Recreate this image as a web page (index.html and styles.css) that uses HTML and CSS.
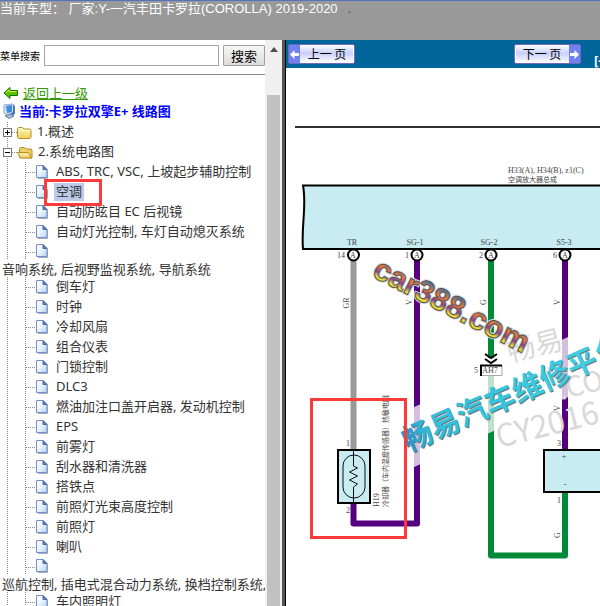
FILE: index.html
```html
<!DOCTYPE html>
<html lang="zh-CN">
<head>
<meta charset="utf-8">
<title>卡罗拉双擎E+ 线路图</title>
<link rel="stylesheet" href="styles.css">
</head>
<body>
<svg class="defs" aria-hidden="true">
  <defs>
    <linearGradient id="pageFill" x1="0" y1="0" x2="1" y2="1"><stop offset="0" stop-color="#fff"/><stop offset=".4" stop-color="#f0f7ff"/><stop offset="1" stop-color="#b5d3f5"/></linearGradient>
    <linearGradient id="folderFill" x1="0" y1="0" x2="0" y2="1"><stop offset="0" stop-color="#fff6b0"/><stop offset="1" stop-color="#eed060"/></linearGradient>
    <symbol id="file" viewBox="0 0 12 14"><path d="M2 13.5h9.5V5" fill="none" stroke="#a8acb8"/><path d="M.5.5h6.500l4 4v8H.5z" fill="url(#pageFill)" stroke="#7590c8"/><path d="M7 .5v4h4z" fill="#6483c0" stroke="#4a68a8"/></symbol>
    <symbol id="folder" viewBox="0 0 15 13"><path d="M.5 11.500v-9l1-1h4l1.500 1.500h6l1 1v7.500l-1 1h-11.500z" fill="url(#folderFill)" stroke="#b58c28"/><path d="M1.500 4.500h12" stroke="#fffbd8"/></symbol>
    <symbol id="folder-open" viewBox="0 0 16 13"><path d="M2.500 11.500v-9l1-1h4l1.500 1.500h5l1 1v8z" fill="#ecd064" stroke="#b58c28"/><path d="M.5 6.500h11l3 5.500h-11z" fill="url(#folderFill)" stroke="#b58c28"/></symbol>
  </defs>
</svg>
<header class="top">当前车型： 厂家:Y-一汽丰田卡罗拉(COROLLA) 2019-2020<span class="dot">.</span></header>
<div class="main">
  <aside class="side">
    <div class="side-body">
      <form class="search">
        <label for="q">菜单搜索</label>
        <input id="q" type="text">
        <button type="button">搜索</button>
      </form>
      <nav class="menu">
        <div class="line back"><svg width="16" height="14" viewBox="0 0 16 14" aria-hidden="true"><path d="M1 7l6-5.500v3h7.500v5H7v3z" fill="#55c400" stroke="#176f00"/><path d="M3 6.500L6.500 4v1.500h7" fill="none" stroke="#e4f030"/></svg><a href="#">返回上一级</a></div>
        <div class="line current"><svg width="14" height="16" viewBox="0 0 14 16" aria-hidden="true"><path d="M1 2l8-1 2 1v8l-7 2-3-2z" fill="#d2e3f8" stroke="#8ba8d0"/><path d="M3 3l6-1v7l-5 1z" fill="#398fe0"/><path d="M10 2l2 1v8l-4 2v-3l2-1z" fill="#5074ac"/><path d="M2 13l5-2 4 2-5 2.500z" fill="#a9bad2" stroke="#6881a8"/></svg><b>当前:卡罗拉双擎E+ 线路图</b></div>
        <ul class="tree">
          <li class="node"><span class="toggle plus"></span><svg width="15" height="13"><use href="#folder"/></svg><a href="#">1.概述</a></li>
          <li class="node"><span class="toggle"></span><svg width="16" height="13"><use href="#folder-open"/></svg><a href="#">2.系统电路图</a></li>
          <li class="leaf"><svg><use href="#file"/></svg><a href="#">ABS, TRC, VSC, 上坡起步辅助控制</a></li>
          <li class="leaf marked"><svg><use href="#file"/></svg><a href="#" class="selected">空调</a></li>
          <li class="leaf"><svg><use href="#file"/></svg><a href="#">自动防眩目 EC 后视镜</a></li>
          <li class="leaf"><svg><use href="#file"/></svg><a href="#">自动灯光控制, 车灯自动熄灭系统</a></li>
          <li class="leaf short"><svg><use href="#file"/></svg></li>
          <li class="wrapped"><a href="#">音响系统, 后视野监视系统, 导航系统</a></li>
          <li class="leaf"><svg><use href="#file"/></svg><a href="#">倒车灯</a></li>
          <li class="leaf"><svg><use href="#file"/></svg><a href="#">时钟</a></li>
          <li class="leaf"><svg><use href="#file"/></svg><a href="#">冷却风扇</a></li>
          <li class="leaf"><svg><use href="#file"/></svg><a href="#">组合仪表</a></li>
          <li class="leaf"><svg><use href="#file"/></svg><a href="#">门锁控制</a></li>
          <li class="leaf"><svg><use href="#file"/></svg><a href="#">DLC3</a></li>
          <li class="leaf"><svg><use href="#file"/></svg><a href="#">燃油加注口盖开启器, 发动机控制</a></li>
          <li class="leaf"><svg><use href="#file"/></svg><a href="#">EPS</a></li>
          <li class="leaf"><svg><use href="#file"/></svg><a href="#">前雾灯</a></li>
          <li class="leaf"><svg><use href="#file"/></svg><a href="#">刮水器和清洗器</a></li>
          <li class="leaf"><svg><use href="#file"/></svg><a href="#">搭铁点</a></li>
          <li class="leaf"><svg><use href="#file"/></svg><a href="#">前照灯光束高度控制</a></li>
          <li class="leaf"><svg><use href="#file"/></svg><a href="#">前照灯</a></li>
          <li class="leaf"><svg><use href="#file"/></svg><a href="#">喇叭</a></li>
          <li class="leaf short"><svg><use href="#file"/></svg></li>
          <li class="wrapped"><a href="#">巡航控制, 插电式混合动力系统, 换档控制系统,</a></li>
          <li class="leaf"><svg><use href="#file"/></svg><a href="#">车内照明灯</a></li>
        </ul>
      </nav>
    </div>
    <div class="scroll"><svg width="8" height="5" viewBox="0 0 8 5" aria-hidden="true"><path d="M0 5L4 0l4 5z" fill="#505050"/></svg><div class="thumb"></div></div>
  </aside>
  <section class="view">
    <div class="bar">
      <button type="button" class="page"><span class="arrow"><svg width="9" height="9" viewBox="0 0 9 9" aria-hidden="true"><path d="M0 4.500L4.500 0v3H9v3H4.500v3z" fill="#fff"/></svg></span><span class="word">上一 页</span></button>
      <button type="button" class="page"><span class="word">下一 页</span><span class="arrow"><svg width="9" height="9" viewBox="0 0 9 9" aria-hidden="true"><path d="M9 4.500L4.500 0v3H0v3h4.500v3z" fill="#fff"/></svg></span></button>
      <span class="fit">[-</span>
    </div>
    <svg class="diagram" width="414" height="538" viewBox="286 68 414 538" role="img" aria-label="空调电路图">
      <defs>
        <linearGradient id="rainbow" x1="0" y1="0" x2="0" y2="1"><stop offset=".2" stop-color="#4d70a0"/><stop offset=".42" stop-color="#f07a30"/><stop offset=".6" stop-color="#8c4096"/><stop offset=".74" stop-color="#f0e030"/><stop offset="1" stop-color="#c8b020"/></linearGradient>
        <linearGradient id="cyan" x1="0" x2="1"><stop offset="0" stop-color="#2590cc"/><stop offset=".12" stop-color="#30bedc"/><stop offset="1" stop-color="#40d2e4"/></linearGradient>
      </defs>
      <path d="M295 127H700" stroke="#332c30" stroke-width="2"/>
      <g class="cad"><text x="508" y="173">H33(A), H34(B), z1(C)</text><text x="508" y="182" class="song">空调放大器总成</text></g>
      <path d="M700 185.500H303C307 207 301 225 303 249H700" fill="#c9ebf2" stroke="#000" stroke-width="2"/>
      <g fill="none" stroke-width="6" stroke-linejoin="round">
        <path d="M353.500 260V450" stroke="#999"/>
        <path d="M417 260V523.500H353.500V502" stroke="#54007f"/>
        <path d="M491 260V358M491 376V555.500H565V492" stroke="#008937"/>
        <path d="M565 260V450" stroke="#54007f"/>
      </g>
      <g fill="#fff" stroke="#000" stroke-width="2"><circle cx="353.500" cy="255" r="5.500"/><circle cx="417" cy="255" r="5.500"/><circle cx="491" cy="255" r="5.500"/><circle cx="565" cy="255" r="5.500"/></g>
      <g class="cad mid"><text x="353" y="258">A</text><text x="417" y="258">A</text><text x="491" y="258">A</text><text x="565" y="258">A</text><text x="352" y="245">TR</text><text x="415" y="245">SG-1</text><text x="489" y="245">SG-2</text><text x="564" y="245">S5-3</text><text x="341" y="258">14</text><text x="407" y="258">1</text><text x="481" y="258">2</text><text x="555" y="258">6</text><text x="348" y="446">1</text><text x="348" y="513">2</text><text x="559" y="446">3</text><text x="559" y="503">1</text><text x="476" y="373">5</text>
        <text transform="translate(349 303) rotate(-90)">GR</text><text transform="translate(412 302) rotate(-90)">V</text><text transform="translate(486 302) rotate(-90)">G</text><text transform="translate(560 302) rotate(-90)">V</text><text transform="translate(560 408) rotate(-90)">V</text><text transform="translate(560 535) rotate(-90)">G</text></g>
      <path d="M485 354l6 4 6-4M485 359l6 4 6-4" fill="none" stroke="#000" stroke-width="2"/>
      <g class="cad"><text class="song" transform="translate(388 507) rotate(-90)">冷却器（车内温度传感器）热敏电阻</text><text transform="translate(379 507) rotate(-90)">H19</text></g>
      <g stroke="#000" stroke-width="2" fill="#c9ebf2"><path d="M338 450h32v53h-32z"/><path d="M700 450H544v42H700"/></g>
      <g fill="none" stroke="#111" stroke-width="1"><rect x="343" y="455" width="22" height="43" rx="11"/><path d="M353.500 450v16l4 2-8 4 8 4-8 4 8 4-4 3v16"/></g>
      <g class="cad mid"><text x="564" y="459">+</text><text x="565" y="487">-</text></g>
      <path d="M401 413L610 318V378L401 473z" fill="#fff" fill-opacity=".75"/>
      <path d="M481 365.500h21v10h-21z" fill="#fff" stroke="#aaa"/><path d="M502 365.500h-21v10.500" fill="none" stroke="#000" stroke-width="2"/>
      <text x="490" y="373" class="cad mid">AH7</text>
      <g class="ghost"><text transform="translate(510 362) rotate(-14)" font-size="28">畅易</text><text transform="translate(561 400) rotate(-14)" font-size="28">.CO</text><text transform="translate(499 448) rotate(-14)" font-size="31">CY2016</text></g>
      <text class="site halo" transform="translate(371 276) rotate(27)">car388.com</text>
      <text class="site" transform="translate(371 276) rotate(27)">car388.com</text>
      <text class="brand under" transform="translate(409 453) rotate(-24)">畅易汽车维修平台</text>
      <text class="brand" transform="translate(408 452) rotate(-24)">畅易汽车维修平台</text>
      <path d="M311.500 399.500h94v138h-94z" fill="none" stroke="#fc3a3a" stroke-width="3"/>
    </svg>
  </section>
</div>
</body>
</html>
```

FILE: styles.css
```css
*, *::after { box-sizing: border-box; }
body {
  margin: 0;
  height: 100vh;
  display: flex;
  flex-direction: column;
  overflow: hidden;
  background: #fff;
  color: #333;
  font: 13px/20px "Noto Sans", "Noto Sans CJK SC", sans-serif;
}
.defs { position: absolute; width: 0; height: 0; }
button { padding: 0; margin: 0; }

.top {
  flex: none;
  height: 40px;
  border-top: 1px solid #5273c4;
  background: #999;
  color: #fff;
  font: 13px/16px "Liberation Sans", "Noto Sans CJK SC", sans-serif;
  white-space: pre;
}
.dot { margin-left: 10px; color: #533a20; }

.main { flex: 1; display: flex; min-height: 0; }
.side { flex: none; display: flex; width: 286px; border-right: 1px solid #000; box-shadow: inset -3px 0 #555; padding-right: 3px; }
.side-body { flex: 1; min-width: 0; overflow: hidden; }

.search {
  display: flex;
  align-items: center;
  height: 35px;
  padding-bottom: 3px;
  border-bottom: 1px solid #888;
  color: #000;
}
.search label { width: 44px; font-size: 10px; white-space: nowrap; }
.search input { flex: 1; min-width: 0; height: 21px; margin-right: 4px; border: 1px solid #a5a5a5; background: #fff; }
.search button {
  width: 42px;
  height: 21px;
  border: 1px solid #a0a0a0;
  border-radius: 1px;
  background: linear-gradient(#f6f6f6, #dcdcdc);
  font: 13px/18px "Noto Sans CJK SC", sans-serif;
}

.menu { padding-top: 8px; white-space: nowrap; }
.menu a { color: inherit; text-decoration: none; }
.line { display: flex; align-items: center; gap: 4px; height: 20px; padding-left: 3px; }
.menu .back a { color: #390; text-decoration: underline; }
.line.current { height: 19px; padding-bottom: 3px; gap: 2px; color: #00f; }

.tree { margin: 0; padding: 0; list-style: none; }
.tree li { display: flex; align-items: center; height: 20px; }
.tree .node {
  gap: 5px;
  padding-left: 3px;
  background:
    repeating-linear-gradient(#888 0 1px, transparent 1px 2px) 7px 0 / 1px 100% no-repeat,
    repeating-linear-gradient(90deg, #888 0 1px, transparent 1px 2px) 12px 10px / 5px 1px no-repeat;
}
.tree .node a { padding-bottom: 2px; }
.toggle { width: 9px; height: 9px; border: 1px solid #777; background: linear-gradient(#000, #000) center / 5px 1px no-repeat #fff; }
.toggle.plus { background: linear-gradient(#000, #000) center / 5px 1px no-repeat, linear-gradient(#000, #000) center / 1px 5px no-repeat #fff; }
.tree .leaf {
  gap: 6px;
  padding-left: 36px;
  background:
    repeating-linear-gradient(#888 0 1px, transparent 1px 2px) 7px 0 / 1px 100% no-repeat,
    repeating-linear-gradient(#888 0 1px, transparent 1px 2px) 25px 0 / 1px 100% no-repeat,
    repeating-linear-gradient(90deg, #888 0 1px, transparent 1px 2px) 26px 10px / 10px 1px no-repeat;
}
.leaf svg { width: 12px; height: 14px; }
.leaf a { padding: 0 2px 2px; line-height: 16px; }
.leaf .selected { background: #bccbe9; }
.tree .short { height: 18px; }
.tree .wrapped { height: 17px; padding-left: 2px; }
.marked { position: relative; }
.marked::after { content: ""; position: absolute; left: 44px; top: -3px; width: 58px; height: 27px; border: 3px solid #fc3a3a; }

.scroll { flex: none; width: 17px; display: flex; flex-direction: column; align-items: center; padding-top: 7px; background: #f0f0f0; }
.thumb { flex: 1; width: 13px; margin-top: 43px; background: #c1c1c1; }

.view { flex: 1; min-width: 0; overflow: hidden; }
.bar { display: flex; align-items: flex-start; height: 28px; padding: 4px 0 0 2px; background: #069; }
.page {
  flex: none;
  display: flex;
  align-items: stretch;
  width: 67px;
  height: 20px;
  border: 1px solid #7068c0;
  border-radius: 2px;
  background: linear-gradient(#fff, #c8d0fc 45%, #fff);
  box-shadow: inset 0 0 0 1px #fff;
  color: #000;
  font: 12px/18px "Noto Sans CJK SC", sans-serif;
}
.page + .page { margin-left: auto; }
.word { flex: 1; white-space: nowrap; }
.arrow { display: flex; align-items: center; justify-content: center; width: 11px; background: #7080ee; }
.fit { width: 6px; margin-left: 13px; padding-top: 7px; overflow: hidden; color: #fff; font-weight: bold; line-height: 18px; }

.diagram { display: block; }
.cad { font: 8px "Liberation Serif", serif; fill: #444; }
.cad.mid { text-anchor: middle; }
.song { font: 7px "Noto Sans CJK SC", sans-serif; }
.ghost { font-family: "Noto Sans CJK SC", sans-serif; fill: #d8d8d8; }
.site { font: bold 31px "Liberation Sans", sans-serif; fill: url(#rainbow); stroke: #555; stroke-width: 1; }
.site.halo { stroke: #ddd; stroke-width: 3; }
.brand { font: bold 30px "Noto Sans CJK SC", sans-serif; fill: url(#cyan); }
.brand.under { fill: #777; }
```
